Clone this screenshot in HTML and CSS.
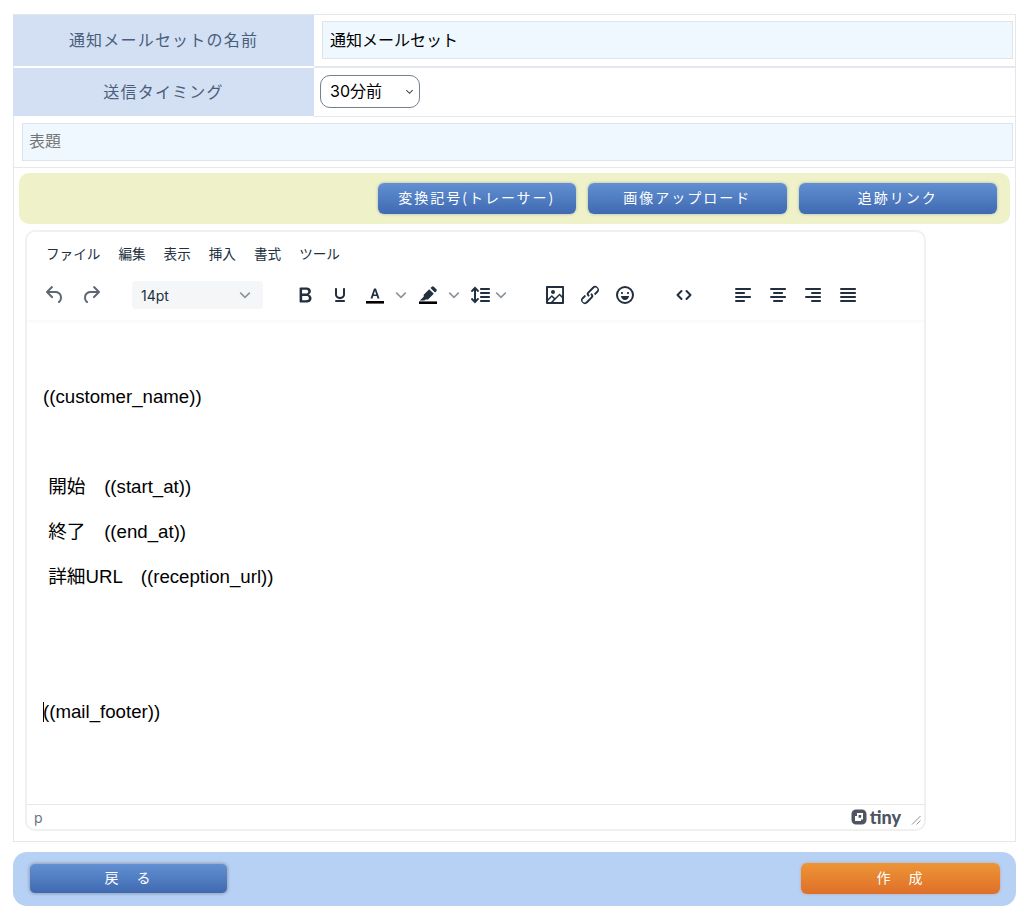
FILE: index.html
```html
<!DOCTYPE html>
<html lang="ja">

<head>
    <meta charset="UTF-8">
    <title>通知メールセット</title>
    <link rel="stylesheet" href="styles.css">
</head>

<body>
    <div class="form-frame">
        <!-- Name -->
        <div class="row row-name">
            <div class="row-label">通知メールセットの名前</div>
            <div class="row-field">
                <input type="text" class="text-input" value="通知メールセット">
            </div>
        </div>

        <!-- Timing -->
        <div class="row row-timing">
            <div class="row-label">送信タイミング</div>
            <div class="row-field">
                <select class="timing-select">
                    <option>30分前</option>
                </select>
            </div>
        </div>

        <!-- Subject -->
        <div class="row row-subject">
            <input type="text" class="text-input" placeholder="表題">
        </div>

        <div class="body-area">
            <div class="tool-bar">
                <button type="button" class="btn btn-blue">変換記号(トレーサー)</button>
                <button type="button" class="btn btn-blue">画像アップロード</button>
                <button type="button" class="btn btn-blue">追跡リンク</button>
            </div>

            <!-- Rich text editor -->
            <div class="editor">
                <div class="editor-header">
                    <div class="menu-bar">
                        <span>ファイル</span>
                        <span>編集</span>
                        <span>表示</span>
                        <span>挿入</span>
                        <span>書式</span>
                        <span>ツール</span>
                    </div>
                    <div class="icon-bar">
                        <svg class="icon icon-dim" viewBox="0 0 24 24"><path d="M6.4 8H12c3.7 0 6.2 2 6.8 5.1.6 2.7-.4 5.6-2.3 6.8a1 1 0 0 1-1-1.8c1.1-.6 1.8-2.7 1.4-4.6-.5-2.1-2.1-3.5-4.9-3.5H6.4l3.3 3.3a1 1 0 1 1-1.4 1.4l-5-5a1 1 0 0 1 0-1.4l5-5a1 1 0 0 1 1.4 1.4L6.4 8Z"/></svg>
                        <svg class="icon icon-dim icon-redo" viewBox="0 0 24 24"><path d="M17.6 8H12c-3.7 0-6.2 2-6.8 5.1-.6 2.7.4 5.6 2.3 6.8a1 1 0 0 0 1-1.8c-1.1-.6-1.8-2.7-1.4-4.6.5-2.1 2.1-3.5 4.9-3.5h5.6l-3.3 3.3a1 1 0 1 0 1.4 1.4l5-5a1 1 0 0 0 0-1.4l-5-5a1 1 0 0 0-1.4 1.4L17.6 8Z"/></svg>

                        <div class="size-select">
                            <span>14pt</span>
                            <svg class="chevron" viewBox="0 0 10 10"><path d="M1 3l4 4 4-4"/></svg>
                        </div>

                        <svg class="icon icon-bold" viewBox="0 0 24 24"><path d="M7.8 19c-.3 0-.5 0-.6-.2l-.2-.5V5.7c0-.2 0-.4.2-.5l.6-.2h5c1.5 0 2.7.3 3.5 1 .7.6 1.1 1.4 1.1 2.5a3 3 0 0 1-.6 1.9c-.4.6-1 1-1.6 1.2.4.1.9.3 1.3.6s.8.7 1 1.2c.4.4.5 1 .5 1.6 0 1.3-.4 2.3-1.3 3-.8.7-2.1 1-3.8 1H7.8Zm5-8.3c.6 0 1.2-.1 1.6-.5.4-.3.6-.7.6-1.3 0-1.1-.8-1.7-2.3-1.7H9.3v3.5h3.4Zm.5 6c.7 0 1.3-.1 1.7-.4.4-.4.6-.9.6-1.5s-.2-1-.7-1.4c-.4-.3-1-.4-2-.4H9.4v3.8h4Z"/></svg>
                        <svg class="icon icon-gap" viewBox="0 0 24 24"><path d="M16 5c.6 0 1 .4 1 1v5.5a4 4 0 0 1-.4 1.8l-1 1.4a5.3 5.3 0 0 1-5.5 1 5 5 0 0 1-1.6-1c-.5-.4-.8-.9-1.1-1.4a4 4 0 0 1-.4-1.8V6c0-.6.4-1 1-1s1 .4 1 1v5.5c0 .3 0 .6.2 1l.6.7a3.3 3.3 0 0 0 2.2.8 3.4 3.4 0 0 0 2.2-.8c.3-.2.4-.5.6-.8l.2-.9V6c0-.6.4-1 1-1ZM8 17h8c.6 0 1 .4 1 1s-.4 1-1 1H8a1 1 0 0 1 0-2Z"/></svg>
                        <svg class="icon icon-gap" viewBox="0 0 24 24"><path fill-rule="evenodd" d="M7.5 15.5 11 5.5h2l3.5 10h-2l-.8-2.4h-3.4l-.8 2.4Zm3.3-4h2.4L12 7.8Z"/><path class="swatch" d="M3 18h18v2.6H3z"/></svg>
                        <svg class="chevron chevron-split" viewBox="0 0 10 10"><path d="M1 3l4 4 4-4"/></svg>
                        <svg class="icon icon-highlight" viewBox="0 0 24 24"><path d="M13.2 6.2l4.6 4.6-5.8 5.8H9.5l-1 1H3.8l3.9-3.9v-2Z"/><path d="M14.5 5l1.3-1.3a1.5 1.5 0 0 1 2 0l2.5 2.5a1.5 1.5 0 0 1 0 2L19 9.5Z"/><path class="swatch" d="M3 18.4h18V21H3z"/></svg>
                        <svg class="chevron chevron-split" viewBox="0 0 10 10"><path d="M1 3l4 4 4-4"/></svg>
                        <svg class="icon icon-lines" viewBox="0 0 24 24"><path d="M21 5a1 1 0 0 1 .1 2H13a1 1 0 0 1-.1-2H21Zm0 4a1 1 0 0 1 .1 2H13a1 1 0 0 1-.1-2H21Zm0 4a1 1 0 0 1 .1 2H13a1 1 0 0 1-.1-2H21Zm0 4a1 1 0 0 1 .1 2H13a1 1 0 0 1-.1-2H21ZM7 3.6l3.7 3.7a1 1 0 0 1-1.3 1.5h-.1L8 7.3v9.2l1.3-1.3a1 1 0 0 1 1.3 0h.1c.4.4.4 1 0 1.3v.1L7 20.4l-3.7-3.7a1 1 0 0 1 1.3-1.5h.1L6 16.7V7.4L4.7 8.7a1 1 0 0 1-1.3 0h-.1a1 1 0 0 1 0-1.3v-.1L7 3.6Z"/></svg>
                        <svg class="chevron chevron-lines" viewBox="0 0 10 10"><path d="M1 3l4 4 4-4"/></svg>

                        <svg class="icon icon-image" viewBox="0 0 24 24"><path d="m5 15.7 3.3-3.2c.3-.3.7-.3 1 0L12 15l4.1-4c.3-.4.8-.4 1 0l2 1.9V5H5v10.7ZM5 18V19h3l2.8-2.9-2-2L5 17.9Zm14-3-2.5-2.4-6.4 6.5H19v-4ZM4 3h16c.6 0 1 .4 1 1v16c0 .6-.4 1-1 1H4a1 1 0 0 1-1-1V4c0-.6.4-1 1-1Zm6 8a2 2 0 1 0 0-4 2 2 0 0 0 0 4Z"/></svg>
                        <svg class="icon icon-gap" viewBox="0 0 24 24"><path d="M6.2 12.3a1 1 0 0 1 1.4 1.4l-2 2a2 2 0 1 0 2.6 2.8l4.8-4.8a1 1 0 0 0 0-1.4 1 1 0 1 1 1.4-1.3 2.9 2.9 0 0 1 0 4L9.6 20a3.9 3.9 0 0 1-5.5-5.5l2-2Zm11.6-.6a1 1 0 0 1-1.4-1.4l2-2a2 2 0 1 0-2.6-2.8L11 10.3a1 1 0 0 0 0 1.4A1 1 0 1 1 9.6 13a2.9 2.9 0 0 1 0-4L14.4 4a3.9 3.9 0 0 1 5.5 5.5l-2 2Z"/></svg>
                        <svg class="icon icon-gap" viewBox="0 0 24 24"><path fill-rule="evenodd" d="M12 3a9 9 0 1 1 0 18 9 9 0 0 1 0-18Zm0 2a7 7 0 1 0 0 14 7 7 0 0 0 0-14Zm-3 4c.6 0 1 .4 1 1s-.4 1-1 1-1-.4-1-1 .4-1 1-1Zm6 0c.6 0 1 .4 1 1s-.4 1-1 1-1-.4-1-1 .4-1 1-1Zm-7 4h8c0 2.2-1.8 4-4 4s-4-1.8-4-4Z"/></svg>

                        <svg class="icon icon-code" viewBox="0 0 24 24"><path class="stroke" d="M9.5 8l-4 4 4 4M14.500 8l4 4-4 4"/></svg>

                        <svg class="icon icon-align" viewBox="0 0 24 24"><path d="M5 5h14c.6 0 1 .4 1 1s-.4 1-1 1H5a1 1 0 1 1 0-2Zm0 4h8c.6 0 1 .4 1 1s-.4 1-1 1H5a1 1 0 1 1 0-2Zm0 8h8c.6 0 1 .4 1 1s-.4 1-1 1H5a1 1 0 0 1 0-2Zm0-4h14c.6 0 1 .4 1 1s-.4 1-1 1H5a1 1 0 0 1 0-2Z"/></svg>
                        <svg class="icon icon-gap" viewBox="0 0 24 24"><path d="M5 5h14c.6 0 1 .4 1 1s-.4 1-1 1H5a1 1 0 1 1 0-2Zm3 4h8c.6 0 1 .4 1 1s-.4 1-1 1H8a1 1 0 1 1 0-2Zm0 8h8c.6 0 1 .4 1 1s-.4 1-1 1H8a1 1 0 0 1 0-2Zm-3-4h14c.6 0 1 .4 1 1s-.4 1-1 1H5a1 1 0 0 1 0-2Z"/></svg>
                        <svg class="icon icon-gap" viewBox="0 0 24 24"><path d="M5 5h14c.6 0 1 .4 1 1s-.4 1-1 1H5a1 1 0 1 1 0-2Zm6 4h8c.6 0 1 .4 1 1s-.4 1-1 1h-8a1 1 0 0 1 0-2Zm0 8h8c.6 0 1 .4 1 1s-.4 1-1 1h-8a1 1 0 0 1 0-2Zm-6-4h14c.6 0 1 .4 1 1s-.4 1-1 1H5a1 1 0 0 1 0-2Z"/></svg>
                        <svg class="icon icon-gap" viewBox="0 0 24 24"><path d="M5 5h14c.6 0 1 .4 1 1s-.4 1-1 1H5a1 1 0 1 1 0-2Zm0 4h14c.6 0 1 .4 1 1s-.4 1-1 1H5a1 1 0 1 1 0-2Zm0 4h14c.6 0 1 .4 1 1s-.4 1-1 1H5a1 1 0 0 1 0-2Zm0 4h14c.6 0 1 .4 1 1s-.4 1-1 1H5a1 1 0 0 1 0-2Z"/></svg>
                    </div>
                </div>

                <div class="editor-body">
                    <p>&nbsp;</p>
                    <p>((customer_name))</p>
                    <p>&nbsp;</p>
                    <p>&nbsp;開始　((start_at))</p>
                    <p>&nbsp;終了　((end_at))</p>
                    <p>&nbsp;詳細URL　((reception_url))</p>
                    <p>&nbsp;</p>
                    <p>&nbsp;</p>
                    <p><span class="caret"></span>((mail_footer))</p>
                </div>

                <div class="status-bar">
                    <span class="status-path">p</span>
                    <div class="status-right">
                        <svg class="tiny-logo" viewBox="0 0 16 16"><path fill-rule="evenodd" d="M5 .5h6A4.500 4.500 0 0 1 15.500 5v6a4.500 4.500 0 0 1-4.500 4.500H5A4.500 4.500 0 0 1 .5 11V5A4.500 4.500 0 0 1 5 .5ZM6 4h6v6.500H10V12H4V7h2ZM7.600 6v2.800h2.600V6Z"/></svg>
                        <span class="tiny-word">tiny</span>
                        <svg class="resize-handle" viewBox="0 0 10 10"><path d="M1 9.500 9.500 1M5.500 9.500 9.500 5.500"/></svg>
                    </div>
                </div>
            </div>
        </div>
    </div>

    <!-- Back / create -->
    <div class="action-bar">
        <button type="button" class="btn btn-blue btn-back">戻　る</button>
        <button type="button" class="btn btn-orange">作　成</button>
    </div>
</body>

</html>
```

FILE: styles.css
```css
/* Basic reset */

* {
    margin: 0;
    padding: 0;
    box-sizing: border-box;
}

body {
    font-family: "Liberation Sans", "Noto Sans CJK JP", sans-serif;
    background-color: #fff;
    color: #000;
    padding: 14px 8px 0 13px;
}

/* Form table */

.form-frame {
    border: 1px solid #e4e7ee;
    width: 1003px;
}

.row {
    display: flex;
}

.row-name {
    height: 53px;
}

.row-timing {
    height: 49px;
}

.row-label {
    width: 301px;
    flex-shrink: 0;
    display: flex;
    align-items: center;
    justify-content: center;
    background-color: #d3e0f3;
    color: #4a5e7c;
    font-size: 16px;
    letter-spacing: 1.2px;
    margin-left: -1px;
    padding-bottom: 3px;
    height: 48px;
}

.row-name .row-label {
    height: 51px;
}

.row-field {
    flex: 1;
    padding-left: 8px;
    padding-right: 2px;
    display: flex;
    align-items: center;
}

.row-name .row-field {
    border-bottom: 2px solid #e4e7ee;
    padding-left: 8px;
    align-items: flex-start;
    padding-top: 6px;
}

.row-timing .row-field {
    border-bottom: 1px solid #e4e7ee;
    padding-left: 6px;
    padding-bottom: 1px;
}

.text-input {
    width: 100%;
    height: 38px;
    border: 1px solid #dfe3ea;
    background-color: #f0f8ff;
    padding: 0 7px 2px;
    font-family: "Liberation Sans", "Noto Sans CJK JP", sans-serif;
    font-size: 16px;
    color: #000;
}

.text-input::placeholder {
    color: #757575;
}

.timing-select {
    width: 100px;
    height: 33px;
    border: 1px solid #75808f;
    border-radius: 10px;
    appearance: none;
    background: #fff url("data:image/svg+xml,%3Csvg xmlns='http://www.w3.org/2000/svg' viewBox='0 0 10 10'%3E%3Cpath d='M1.500 3.500 5 7l3.500-3.500' fill='none' stroke='%23444' stroke-width='1.200'/%3E%3C/svg%3E") no-repeat right 5px center / 9px 9px;
    padding: 0 0 2px 9px;
    font-family: Inter, "Noto Sans CJK JP", sans-serif;
    font-size: 16px;
    color: #000;
}

.row-subject {
    height: 51px;
    padding: 6px 2px 0 8px;
    border-bottom: 1px solid #e4e7ee;
}

.row-subject .text-input {
    padding: 0 6px;
}

.body-area {
    padding: 5px 5px 10px;
}

.tool-bar {
    display: flex;
    justify-content: flex-end;
    gap: 12px;
    background-color: #eff2c8;
    border-radius: 10px;
    padding: 10px 13px;
    height: 51px;
    margin-bottom: 6px;
}

/* Buttons */

.btn {
    width: 198.5px;
    height: 31px;
    border: none;
    border-radius: 6px;
    padding-bottom: 4px;
    color: #fff;
    font-family: "Noto Sans CJK JP", sans-serif;
    font-size: 14px;
    letter-spacing: 2px;
    cursor: pointer;
}

.btn-blue {
    background: linear-gradient(#6290d2, #3f69b1);
    box-shadow: 0 0 3px rgba(60, 90, 150, 0.45);
}

.btn-orange {
    background: linear-gradient(#ed9537, #df6f29);
    box-shadow: 0 0 3px rgba(200, 110, 50, 0.45);
}

.btn-back {
    border: 1px solid #a9b1bd;
}

/* Editor */

.editor {
    width: 901px;
    height: 601px;
    margin-left: 6px;
    border: 2px solid #f0f0f0;
    border-radius: 10px;
    display: flex;
    flex-direction: column;
    overflow: hidden;
}

.editor-header {
    height: 88px;
    flex-shrink: 0;
    padding: 11px 0 0 19px;
    box-shadow: 0 1px 4px rgba(34, 47, 62, 0.05);
}

.menu-bar {
    display: flex;
    gap: 18px;
    font-family: "Noto Sans CJK JP", sans-serif;
    font-size: 13.6px;
    line-height: 20px;
    color: #222f3e;
}

.icon-bar {
    display: flex;
    align-items: center;
    height: 28px;
    margin-top: 18px;
    margin-left: -3px;
}

.icon {
    width: 24px;
    height: 24px;
    flex-shrink: 0;
    fill: #222f3e;
}

.icon-dim {
    fill: #5d6672;
}

.icon-redo {
    margin-left: 12px;
}

.icon-bold {
    width: 26px;
    height: 26px;
    margin-left: 29px;
    margin-right: -1px;
}

.icon-gap {
    margin-left: 11px;
}

.icon-highlight {
    margin-left: 9px;
}

.icon-lines {
    margin-left: 8px;
}

.icon-image {
    margin-left: 36px;
}

.icon-code {
    margin-left: 35px;
}

.icon-align {
    margin-left: 35px;
}

.swatch {
    fill: #000;
}

.stroke {
    fill: none;
    stroke: #222f3e;
    stroke-width: 2;
    stroke-linecap: round;
    stroke-linejoin: round;
}

.chevron {
    width: 12px;
    height: 12px;
    flex-shrink: 0;
    fill: none;
    stroke: #8a929c;
    stroke-width: 1.3;
}

.chevron-split {
    margin-left: 8px;
}

.chevron-lines {
    margin-left: 3px;
}

.size-select {
    width: 131px;
    height: 28px;
    margin-left: 29px;
    padding: 0 12px 0 9px;
    display: flex;
    align-items: center;
    justify-content: space-between;
    background-color: #f5f6f7;
    border-radius: 4px;
    font-family: Inter, sans-serif;
    font-size: 14px;
    color: #222f3e;
}

.editor-body {
    flex: 1;
    padding-left: 16px;
    padding-top: 19px;
    font-size: 18.67px;
    line-height: 26px;
}

.editor-body p {
    margin-bottom: 19px;
}

.caret {
    display: inline-block;
    width: 1px;
    height: 20px;
    margin-right: -1px;
    background-color: #000;
    vertical-align: -4px;
}

.status-bar {
    height: 25px;
    flex-shrink: 0;
    border-top: 1px solid #e8e8e8;
    display: flex;
    align-items: center;
    justify-content: space-between;
    padding: 0 3px 0 7px;
    font-family: Inter, sans-serif;
    font-size: 14px;
    color: #6b7480;
}

.status-right {
    display: flex;
    align-items: center;
}

.tiny-logo {
    width: 16px;
    height: 16px;
    fill: #4c5561;
}

.tiny-word {
    margin-left: 3px;
    font-family: Lato, sans-serif;
    font-weight: 900;
    font-size: 18px;
    color: #4c5561;
}

.resize-handle {
    width: 10px;
    height: 10px;
    margin-left: 10px;
    margin-top: 6px;
    fill: none;
    stroke: #8a929c;
    stroke-width: 1;
}

/* Bottom bar */

.action-bar {
    width: 1003px;
    height: 54px;
    margin-top: 10px;
    padding: 11px 16px;
    display: flex;
    justify-content: space-between;
    background-color: #b7d1f5;
    border-radius: 14px;
}

.action-bar .btn {
    width: 199px;
}
```
